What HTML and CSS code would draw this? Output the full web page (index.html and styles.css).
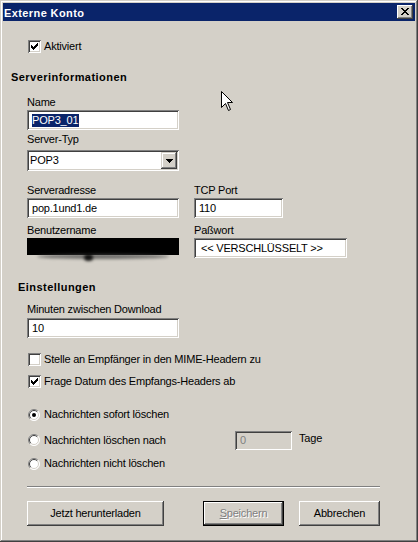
FILE: index.html
```html
<!DOCTYPE html>
<html>
<head>
<meta charset="utf-8">
<title>Externe Konto</title>
<link rel="stylesheet" href="styles.css">
</head>
<body>
<div class="window">
  <div class="titlebar">
    <span class="title">Externe Konto</span>
    <span class="close-btn"><svg width="8" height="7" viewBox="0 0 8 7" shape-rendering="crispEdges"><path d="M0 0h2v1h-2z M6 0h2v1h-2z M1 1h2v1h-2z M5 1h2v1h-2z M2 2h4v1h-4z M3 3h2v1h-2z M2 4h4v1h-4z M1 5h2v1h-2z M5 5h2v1h-2z M0 6h2v1h-2z M6 6h2v1h-2z" fill="#000"/></svg></span>
  </div>
  <div class="client">
    <div class="check row-aktiv">
      <span class="cbox"><svg width="7" height="7" viewBox="0 0 7 7" shape-rendering="crispEdges"><path d="M6 0h1v1h-1z M5 1h2v1h-2z M0 2h1v1h-1z M4 2h3v1h-3z M0 3h2v1h-2z M3 3h3v1h-3z M0 4h5v1h-5z M1 5h3v1h-3z M2 6h1v1h-1z" fill="#000"/></svg></span>
      <span>Aktiviert</span>
    </div>

    <div class="group-title gt-server">Serverinformationen</div>

    <div class="field f-name">
      <div class="lbl">Name</div>
      <div class="edit w-wide"><span class="sel">POP3_01</span></div>
    </div>

    <div class="field f-type">
      <div class="lbl">Server-Typ</div>
      <div class="combo">
        <span class="combo-text">POP3</span>
        <span class="combo-btn"><svg width="7" height="4" viewBox="0 0 7 4" shape-rendering="crispEdges"><path d="M0 0h7v1h-7z M1 1h5v1h-5z M2 2h3v1h-3z M3 3h1v1h-1z" fill="#000"/></svg></span>
      </div>
    </div>

    <div class="pair f-addr">
      <div class="col-left">
        <div class="lbl">Serveradresse</div>
        <div class="edit w-wide">pop.1und1.de</div>
      </div>
      <div class="col-right">
        <div class="lbl">TCP Port</div>
        <div class="edit w-port">110</div>
      </div>
    </div>

    <div class="pair f-user">
      <div class="col-left">
        <div class="lbl">Benutzername</div>
        <div class="redact"></div>
        <div class="smudge"></div>
        <div class="smudge-dot"></div>
      </div>
      <div class="col-right">
        <div class="lbl">Paßwort</div>
        <div class="edit w-pass">&lt;&lt; VERSCHLÜSSELT &gt;&gt;</div>
      </div>
    </div>

    <div class="group-title gt-settings">Einstellungen</div>

    <div class="field f-min">
      <div class="lbl">Minuten zwischen Download</div>
      <div class="edit w-wide">10</div>
    </div>

    <div class="check row-mime">
      <span class="cbox"></span>
      <span>Stelle an Empfänger in den MIME-Headern zu</span>
    </div>
    <div class="check row-date">
      <span class="cbox"><svg width="7" height="7" viewBox="0 0 7 7" shape-rendering="crispEdges"><path d="M6 0h1v1h-1z M5 1h2v1h-2z M0 2h1v1h-1z M4 2h3v1h-3z M0 3h2v1h-2z M3 3h3v1h-3z M0 4h5v1h-5z M1 5h3v1h-3z M2 6h1v1h-1z" fill="#000"/></svg></span>
      <span>Frage Datum des Empfangs-Headers ab</span>
    </div>

    <div class="radio row-r1">
      <svg class="rbox" width="12" height="12" viewBox="0 0 12 12">
        <circle cx="6" cy="6" r="5.5" fill="#fff"/>
        <path d="M2.1 9.9A5.5 5.5 0 0 1 9.9 2.1" stroke="#808080" fill="none"/>
        <path d="M9.9 2.1A5.5 5.5 0 0 1 2.1 9.9" stroke="#fff" fill="none"/>
        <path d="M2.8 9.2A4.5 4.5 0 0 1 9.2 2.8" stroke="#404040" fill="none"/>
        <path d="M9.2 2.8A4.5 4.5 0 0 1 2.8 9.2" stroke="#d4d0c8" fill="none"/>
        <circle cx="6" cy="6" r="2" fill="#000"/>
      </svg>
      <span>Nachrichten sofort löschen</span>
    </div>
    <div class="radio row-r2">
      <svg class="rbox" width="12" height="12" viewBox="0 0 12 12">
        <circle cx="6" cy="6" r="5.5" fill="#fff"/>
        <path d="M2.1 9.9A5.5 5.5 0 0 1 9.9 2.1" stroke="#808080" fill="none"/>
        <path d="M9.9 2.1A5.5 5.5 0 0 1 2.1 9.9" stroke="#fff" fill="none"/>
        <path d="M2.8 9.2A4.5 4.5 0 0 1 9.2 2.8" stroke="#404040" fill="none"/>
        <path d="M9.2 2.8A4.5 4.5 0 0 1 2.8 9.2" stroke="#d4d0c8" fill="none"/>
      </svg>
      <span class="r2-text">Nachrichten löschen nach</span>
      <div class="edit disabled w-days">0</div>
      <span class="days">Tage</span>
    </div>
    <div class="radio row-r3">
      <svg class="rbox" width="12" height="12" viewBox="0 0 12 12">
        <circle cx="6" cy="6" r="5.5" fill="#fff"/>
        <path d="M2.1 9.9A5.5 5.5 0 0 1 9.9 2.1" stroke="#808080" fill="none"/>
        <path d="M9.9 2.1A5.5 5.5 0 0 1 2.1 9.9" stroke="#fff" fill="none"/>
        <path d="M2.8 9.2A4.5 4.5 0 0 1 9.2 2.8" stroke="#404040" fill="none"/>
        <path d="M9.2 2.8A4.5 4.5 0 0 1 2.8 9.2" stroke="#d4d0c8" fill="none"/>
      </svg>
      <span>Nachrichten nicht löschen</span>
    </div>

    <div class="separator"></div>

    <div class="buttons">
      <div class="btn b-download">Jetzt herunterladen</div>
      <div class="btn b-save default"><span class="disabled-text"><u>S</u>peichern</span></div>
      <div class="btn b-cancel">Abbrechen</div>
    </div>
  </div>

  <svg class="cursor" width="13" height="21" viewBox="0 0 13 21">
    <path d="M0.5 0.5V16.5L4.5 12.5L7.5 19.5L9.5 18.5L6.5 11.5H11.5Z" fill="#fff" stroke="#000" stroke-width="1" stroke-linejoin="miter"/>
  </svg>
</div>
</body>
</html>
```

FILE: styles.css
```css
html, body {
  margin: 0;
  padding: 0;
  background: #d4d0c8;
}

.window {
  position: relative;
  width: 418px;
  height: 542px;
  box-sizing: border-box;
  padding: 3px;
  background: #d4d0c8;
  box-shadow: inset -1px -1px #404040, inset 1px 1px #d4d0c8, inset -2px -2px #808080, inset 2px 2px #fff;
  font-family: "Liberation Sans", Arial, sans-serif;
  font-size: 11px;
  letter-spacing: -0.2px;
  color: #000;
  overflow: hidden;
}

/* Title bar */
.titlebar {
  height: 18px;
  background: #0a246a;
  display: flex;
  justify-content: space-between;
  align-items: flex-start;
}
.title {
  color: #fff;
  font-weight: bold;
  letter-spacing: 0.4px;
  line-height: 13px;
  padding: 4px 0 0 1px;
}
.close-btn {
  width: 16px;
  height: 14px;
  margin: 2px 2px 0 0;
  box-sizing: border-box;
  background: #d4d0c8;
  box-shadow: inset -1px -1px #404040, inset 1px 1px #fff, inset -2px -2px #808080, inset 2px 2px #d4d0c8;
  display: flex;
  align-items: center;
  justify-content: center;
  padding-bottom: 1px;
}
.close-btn svg { display: block; }

/* Client */
.client {
  position: relative;
}

.lbl {
  height: 13px;
  line-height: 13px;
  white-space: nowrap;
}

.group-title {
  font-weight: bold;
  letter-spacing: 0.45px;
  line-height: 13px;
  height: 13px;
}
.gt-server { margin: 18px 0 0 8px; }
.gt-settings { margin: 23px 0 0 15px; }

.edit,
.combo,
.cbox {
  box-shadow: inset 1px 1px #808080, inset -1px -1px #fff, inset 2px 2px #404040, inset -2px -2px #d4d0c8;
}

.edit {
  height: 20px;
  box-sizing: border-box;
  background: #fff;
  line-height: 20px;
  padding: 0 3px 0 5px;
  white-space: nowrap;
  overflow: hidden;
}
.edit.disabled {
  background: #d4d0c8;
  color: #808080;
  height: 19px;
  line-height: 19px;
}
.w-wide { width: 152px; }
.w-port { width: 89px; }
.w-pass { width: 153px; padding-left: 7px; }
.w-days { width: 57px; }

.sel {
  display: inline-block;
  background: #0a246a;
  color: #fff;
  line-height: 13px;
  vertical-align: middle;
  padding: 0 1px 0 0;
  margin-top: -1px;
}

.field { margin-left: 24px; }
.field .edit, .field .combo, .pair .edit { margin-top: 1px; }

.f-name { margin-top: 12px; }
.f-type { margin-top: 3px; }
.f-type .combo { margin-top: 4px; }
.f-min { margin-top: 9px; }
.f-min .edit { margin-top: 2px; }

.combo {
  width: 152px;
  height: 21px;
  box-sizing: border-box;
  background: #fff;
  display: flex;
  justify-content: space-between;
  align-items: center;
  padding: 2px 2px 2px 3px;
}
.combo-text { line-height: 17px; }
.combo-btn {
  width: 16px;
  height: 17px;
  box-sizing: border-box;
  background: #d4d0c8;
  box-shadow: inset -1px -1px #404040, inset 1px 1px #d4d0c8, inset -2px -2px #808080, inset 2px 2px #fff;
  display: flex;
  align-items: center;
  justify-content: center;
}
.combo-btn svg { display: block; }

.pair {
  display: flex;
  gap: 15px;
  margin-left: 24px;
}
.col-left { position: relative; width: 152px; }
.f-addr { margin-top: 13px; }
.f-user { margin-top: 6px; }

.redact {
  width: 152px;
  height: 17px;
  margin-top: 1px;
  background: #000;
}
.smudge {
  position: absolute;
  left: 10px;
  top: 30px;
  width: 132px;
  height: 5px;
  background: rgba(70, 70, 70, 0.7);
  border-radius: 50%;
  filter: blur(1.5px);
}
.smudge-dot {
  position: absolute;
  left: 57px;
  top: 30px;
  width: 9px;
  height: 7px;
  background: rgba(0, 0, 0, 0.85);
  border-radius: 50%;
  filter: blur(1.5px);
}

/* Checkboxes */
.check {
  display: flex;
  align-items: center;
  gap: 3px;
  height: 13px;
  line-height: 13px;
  margin-left: 25px;
  white-space: nowrap;
}
.cbox {
  width: 13px;
  height: 13px;
  box-sizing: border-box;
  background: #fff;
  display: flex;
  align-items: center;
  justify-content: center;
  flex: none;
}
.cbox svg { display: block; }
.row-aktiv { margin-top: 19px; }
.row-mime { margin-top: 15px; }
.row-date { margin-top: 9px; }

/* Radios */
.radio {
  display: flex;
  align-items: center;
  gap: 4px;
  height: 13px;
  line-height: 13px;
  margin-left: 25px;
  white-space: nowrap;
}
.rbox { display: block; flex: none; }
.row-r1 { margin-top: 20px; }
.row-r2 { margin-top: 9px; height: 20px; gap: 0; }
.row-r2 .rbox { margin-right: 4px; }
.r2-text { width: 191px; }
.days { margin-left: 7px; margin-top: -3px; }
.row-r3 { margin-top: 7px; }

/* Separator */
.separator {
  margin: 16px 0 0 24px;
  width: 353px;
  border-top: 1px solid #808080;
  border-bottom: 1px solid #fff;
}

/* Buttons */
.buttons {
  display: flex;
  margin: 13px 0 0 24px;
}
.btn {
  height: 25px;
  box-sizing: border-box;
  background: #d4d0c8;
  box-shadow: inset -1px -1px #404040, inset 1px 1px #fff, inset -2px -2px #808080, inset 2px 2px #d4d0c8;
  display: flex;
  align-items: center;
  justify-content: center;
  line-height: 13px;
  white-space: nowrap;
}
.btn.default {
  border: 1px solid #000;
}
.b-download { width: 137px; }
.b-save { width: 81px; margin-left: 39px; }
.b-cancel { width: 81px; margin-left: 15px; }
.disabled-text {
  color: #808080;
  text-shadow: 1px 1px 0 #fff;
}
.disabled-text u { text-decoration-color: #808080; }

/* Cursor overlay */
.cursor {
  position: absolute;
  left: 221px;
  top: 91px;
}
```
